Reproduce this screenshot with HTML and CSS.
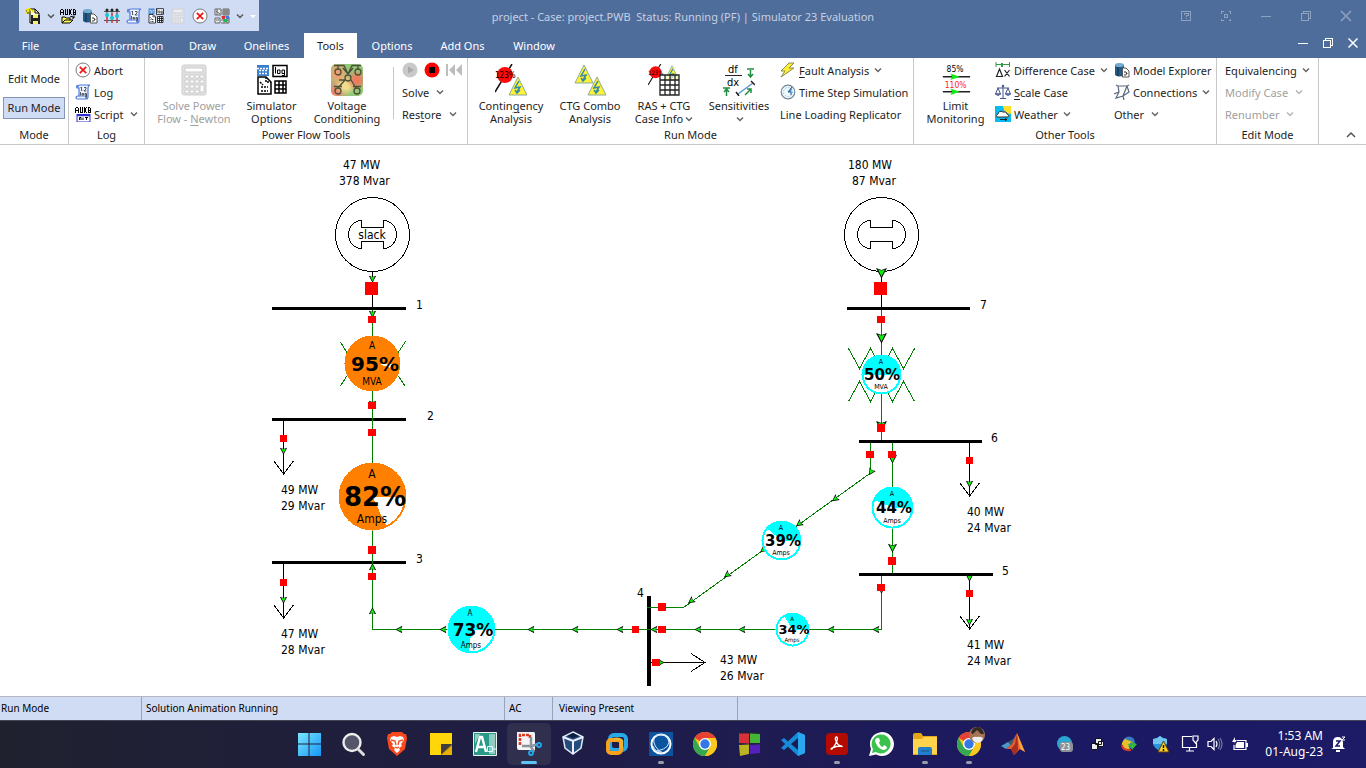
FILE: index.html
```html
<!DOCTYPE html>
<html lang="en">
<head>
<meta charset="utf-8">
<title>project - Case: project.PWB</title>
<link rel="stylesheet" href="styles.css">
</head>
<body>
<svg class="defs" aria-hidden="true">
  <symbol id="chev" viewBox="0 0 8 8"><path d="M1 2.500 4 5.500 7 2.500" fill="none" stroke="currentColor" stroke-width="1.500"/></symbol>
  <symbol id="abort" viewBox="0 0 16 16"><circle cx="8" cy="8" r="7" fill="#fff" stroke="#777"/><path d="M4.800 4.800 11.200 11.200M11.200 4.800 4.800 11.200" stroke="#f01818" stroke-width="1.800"/></symbol>
  <symbol id="log" viewBox="0 0 16 16"><path d="M3 2.500Q3 1 5 1H15Q13 1.500 13 4V12.500Q13 15 11 15H2.500Q1 15 1 13.500T3 12H4V4H2Q1 3 2 1.500Z" fill="#edf3ff" stroke="#4c78dc" stroke-width="1.200"/><path d="M4 12H11V15" fill="none" stroke="#4c78dc"/><path d="M5.500 4 6.500 3V7M8 6.500V7M9 3.500H11V5L9 7H11.500M5.500 8V11.500M7 9.500H8.500V11H7ZM10 9.500H11.500V13H10M10 9.500V11H11.500" fill="none" stroke="#333" stroke-width=".8"/></symbol>
  <symbol id="aux" viewBox="0 0 16 16"><g fill="none" stroke="#000" stroke-width="1" shape-rendering="crispEdges"><path d="M.5 7V3L1.500 1.500H2.500L3.500 3V7M.5 4.500H3.500M5.500 1V6.500H7.500V1M9 1 11.500 7M11.500 1 9 7M13.500 1V6.500H15.500V2.500L14.500 1.500H13M13.500 4H15.500"/></g></symbol>
  <symbol id="script" viewBox="0 0 16 16"><use href="#aux"/><rect x="2" y="8.500" width="13" height="7.500" fill="#fff" stroke="#3030d0"/><path d="M2 9.500H15" stroke="#3030d0" stroke-width="1.500"/><path d="M4.500 14V11.500H6V14M8 11.500V14M10 11.500H13M11.500 11.500V14" stroke="#000" fill="none"/></symbol>
  <symbol id="auxopen" viewBox="0 0 16 16"><use href="#aux"/><path d="M2 15V9H5L6 10H10V12M2 15 5 12H13L10 15Z" fill="#ffff60" stroke="#000"/><path d="M10 9Q13 7 14 10M14 7.500V10H12" stroke="#000" fill="none"/></symbol>
  <symbol id="newcase" viewBox="0 0 16 16"><path d="M5 1H10L14 5V15H5Z" fill="#fffbd0" stroke="#000"/><path d="M10 1V5H14" fill="none" stroke="#000"/><path d="M6 7H15V16H6Z" fill="#222"/><path d="M8 7H13V10H8ZM8 13H13V16H8Z" fill="#f3ef75"/><path d="M0 2H6M3 0V6M1 5 6 1M7 3H9" stroke="#f4e500" stroke-width="2"/><path d="M1 3H2M4 2H5M2 5H4" stroke="#333"/></symbol>
  <symbol id="cyl" viewBox="0 0 16 16"><path d="M1 3Q5 0 10 3V13Q5 16 1 13Z" fill="#235b87"/><path d="M4 2V14" stroke="#143d60" stroke-width="1.500"/><ellipse cx="5.500" cy="3" rx="4.500" ry="2" fill="#72aad0"/><path d="M8.500 6H12L15 9V15H8.500Z" fill="#fff" stroke="#555"/><path d="M10 13Q12 14 13 11M10 10H12L13 12" fill="none" stroke="#333"/></symbol>
  <symbol id="sliders" viewBox="0 0 16 16"><path d="M3 1V15M8 1V15M13 1V15M0 3.500H16M0 12.500H16" stroke="#555"/><g fill="#222"><circle cx="3" cy="2" r="1.500"/><circle cx="8" cy="2" r="1.500"/><circle cx="13" cy="2" r="1.500"/></g><path d="M3 5V15M8 5V15M13 5V15" stroke="#ef3030"/><g fill="#11c9df"><circle cx="3" cy="7" r="2"/><circle cx="8" cy="10" r="2"/><circle cx="13" cy="8" r="2"/></g></symbol>
  <symbol id="simopt" viewBox="0 0 32 32"><path d="M1 1H13V12H1Z" fill="#397fcd"/><path d="M1 4.500H13M3 6.500H12M3 9.500H12" stroke="#fff" stroke-dasharray="2 1" stroke-width="1.500"/><rect x="17" y="1.500" width="14" height="11" fill="#fff" stroke="#000" stroke-width="1.500"/><path d="M19.500 3V9.500M21.500 6H24V9.500H21.500ZM26 6H28.500V11.500H26M26 6V9.500H28.500" fill="none" stroke="#000"/><path d="M2 13H10L15 18V30H2Z" fill="#fff" stroke="#000" stroke-width="1.500"/><path d="M10 13V18H15M4 18 7 21M5 23H12M5 27H12" fill="none" stroke="#000" stroke-width="1.500" stroke-dasharray="2 1"/><path d="M19 17H30V29H19ZM23 17V29M27 17V29M19 21H30M19 25H30" fill="#fff" stroke="#000" stroke-width="1.500"/></symbol>
  <symbol id="calc" viewBox="0 0 32 32"><rect x="4" y="1" width="24" height="30" rx="2" fill="#e0e0e0" stroke="#cfcfcf"/><rect x="7" y="4" width="18" height="4" fill="#fff" stroke="#cdcdcd"/><g fill="#fff" stroke="#cecece"><path d="M7 11H11V14H7ZM12 11H16V14H12ZM17 11H21V14H17ZM22 11H26V14H22ZM7 16H11V19H7ZM12 16H16V19H12ZM17 16H21V19H17ZM22 16H26V19H22ZM7 21H11V24H7ZM12 21H16V24H12ZM17 21H21V24H17ZM22 21H26V28H22ZM7 26H11V29H7ZM12 26H16V29H12ZM17 26H21V29H17Z"/></g></symbol>
  <symbol id="casegrid" viewBox="0 0 16 16"><path d="M1 1H7V7H1ZM1 10H6V15H1ZM9 1H15V7H9ZM11 1V7M13 1V7M9 3H15M9 5H15M7 9H15V15H7M10 9V15M13 9V15M7 12H15M2 3 6 6M3 1V7M2 12H5" fill="#eee" stroke="#666"/><path d="M8 8H11V11H8Z" fill="#df3030"/><path d="M12 8H15V11H12Z" fill="#4679dc"/><path d="M10 11H13V14H10Z" fill="#20ba58"/></symbol>
  <symbol id="volt" viewBox="0 0 32 32"><g fill="none" stroke="#4c5038" stroke-width="1.300"><path d="M3 1.500H13L17 10 21 1.500H30M7 1.500V5M27 1.500V5M17 8V11M14 16 7 24M20 16 25 24M14 16H8M3 22.500H11M22 22.500H30M12 4 17 10 22 4"/><circle cx="7" cy="8" r="3"/><circle cx="27" cy="8" r="3"/><circle cx="17" cy="14" r="3"/><circle cx="7" cy="27" r="3"/><circle cx="26" cy="27" r="3"/></g></symbol>
  <symbol id="tri" viewBox="0 0 20 20"><path d="M10 1 19 19H1Z" fill="#fff333" stroke="#8ca99d"/><path d="M11 5 7 12 12 11 9 16M7 14 9 17 12 14" fill="none" stroke="#358aaa" stroke-width="1.500"/></symbol>
  <symbol id="breaker-ov" viewBox="0 0 32 32"><path d="M17 0 0 28" stroke="#111" stroke-width="1.500"/><circle cx="10" cy="11" r="8" fill="#ff0808"/><text x="0" y="14" font-size="8">123%</text></symbol>
  <symbol id="cont" viewBox="0 0 32 32"><use href="#breaker-ov"/><use href="#tri" x="13" y="12" width="20" height="20"/></symbol>
  <symbol id="combo" viewBox="0 0 32 32"><use href="#tri" width="20" height="20"/><use href="#tri" x="13" y="12" width="20" height="20"/></symbol>
  <symbol id="ras" viewBox="0 0 32 32"><use href="#tri" x="16" width="16" height="18"/><use href="#breaker-ov" width="24" height="24"/><path d="M12 11H31V31H12ZM17 11V31M22 11V31M27 11V31M12 16H31M12 21H31M12 26H31" fill="#ffffffaa" stroke="#222" stroke-width="1.300"/></symbol>
  <symbol id="sens" viewBox="0 0 32 32"><text x="5" y="9" font-size="11">df</text><path d="M2 11.500H19" stroke="#222"/><text x="4" y="22" font-size="11">dx</text><g stroke="#209040" fill="none" stroke-width="1.500"><path d="M24 5H31M27.500 6V13M25 10 27.500 13 30 10M0 24H7M3.500 25V32M1 28 3.500 25 6 28M22 31 28 25M24 25H28V29"/></g><path d="M15 30 30 19" stroke="#5a98d0" stroke-width="1.500"/><path d="M13 28 16 32M28 17 32 21" stroke="#222" stroke-width="1.500"/></symbol>
  <symbol id="fault" viewBox="0 0 16 16"><path d="M9 1H14L9 6H14L1 15 5 9H1Z" fill="#ffef31" stroke="#8b8b55"/></symbol>
  <symbol id="time" viewBox="0 0 16 16"><circle cx="8" cy="8" r="6.800" fill="#eef7fc" stroke="#718797" stroke-width="1.200"/><circle cx="8" cy="8" r="4.500" fill="none" stroke="#6aaada" stroke-dasharray="1 2"/><path d="M12 3 8 8H11V11" stroke="#245d94" fill="#5396cc"/></symbol>
  <symbol id="limit" viewBox="0 0 32 34"><text x="6" y="8" font-size="9">85%</text><text x="4" y="25" font-size="9" fill="#ff2222">110%</text><path d="M2 13.500H31M2 29.500H31" stroke="#222" stroke-width="1.500"/><path d="M10 10 20 13.500 10 17 12 13.500ZM10 26 20 29.500 10 33 12 29.500Z" fill="#12ec12"/></symbol>
  <symbol id="diff" viewBox="0 0 16 16"><path d="M1 2.500H15M1 0V5M14.500 0V5" stroke="#339b48"/><path d="M7 1V5" stroke="#339b48" stroke-width="2"/><path d="M1.500 14.500 4.500 7 7.500 14.500ZM9.500 8 14.500 14.500M14.500 8 9.500 14.500" fill="none" stroke="#222" stroke-width="1.200"/></symbol>
  <symbol id="scale" viewBox="0 0 16 16"><path d="M8 2V14M5 14.500H11M2 4H14M3 4 .5 10H5.500ZM13 4 10.500 10H15.500Z" fill="none" stroke="#46558c"/><path d="M.5 10Q3 13 5.500 10ZM10.500 10Q13 13 15.500 10Z" fill="#a6b6de" stroke="#46558c"/><circle cx="8" cy="2" r="1.200" fill="#46558c"/></symbol>
  <symbol id="weather" viewBox="0 0 16 16"><path d="M0 0H16V16H0Z" fill="#08baf2"/><path d="M8 0H16V8Q9 8 8 0Z" fill="#ffe02a"/><path d="M2 11Q0 9 3 8Q4 4 8 6Q12 5 12 8Q15 9 13 11Z" fill="#fff" stroke="#333"/><path d="M5 13.500H12M10 12 12 13.500 10 15" stroke="#222" fill="none"/></symbol>
  <symbol id="conn" viewBox="0 0 16 16"><path d="M4 2H13L15 8 9 12 2 14 5 8 4 2M2 1 4 2M13 2 15 1M5 8 0 10M9 12 10 16M13 2 9 12" fill="none" stroke="#59677c" stroke-width="1.200"/></symbol>
  <symbol id="chrome" viewBox="0 0 24 24"><circle cx="12" cy="12" r="12" fill="#fbc91d"/><path d="M12 12 1.600 6A12 12 0 0 1 22.400 6H12Z" fill="#e64132"/><path d="M12 12 6.800 15 1.600 6A12 12 0 0 0 12 24L17.200 15Z" fill="#35a852"/><path d="M12 6H22.400A12 12 0 0 1 12 24L17.200 15Z" fill="#fbc91d"/><circle cx="12" cy="12" r="6" fill="#fff"/><circle cx="12" cy="12" r="4.700" fill="#3478e8"/></symbol>
  <symbol id="flow" viewBox="-6 -6 12 12" overflow="visible"><path d="M-5.500-5 0 5.500 5.500-5 0-3Z" fill="#000"/><path d="M-3.500-3.500 0-2.500 3.500-3.500 0 3.500Z" fill="#0cf00c"/></symbol>
</svg>

<header class="frame">
  <div class="titlebar">
    <div class="quick">
      <button class="q" aria-label="New case"><svg><use href="#newcase"/></svg></button>
      <button class="q drop" aria-label="More case types"><svg><use href="#chev"/></svg></button>
      <button class="q" aria-label="Load auxiliary file"><svg><use href="#auxopen"/></svg></button>
      <button class="q" aria-label="Model Explorer"><svg><use href="#cyl"/></svg></button>
      <button class="q" aria-label="Oneline view"><svg><use href="#sliders"/></svg></button>
      <button class="q" aria-label="Log"><svg><use href="#log"/></svg></button>
      <button class="q" aria-label="Simulator options"><svg><use href="#simopt"/></svg></button>
      <button class="q faded" aria-label="Solve"><svg><use href="#calc"/></svg></button>
      <button class="q" aria-label="Abort"><svg><use href="#abort"/></svg></button>
      <button class="q" aria-label="Case views"><svg><use href="#casegrid"/></svg></button>
      <button class="q drop" aria-label="More views"><svg><use href="#chev"/></svg></button>
      <button class="q drop" aria-label="Customize toolbar"><svg viewBox="0 0 8 8"><path d="M1 3H7L4 6Z" fill="#fff"/></svg></button>
    </div>
    <h1 class="title">project - Case: project.PWB&nbsp; Status: Running (PF) | Simulator 23 Evaluation</h1>
    <div class="winbtns">
      <button aria-label="Help"><svg viewBox="0 0 12 12"><path d="M1.500 1.500H10.500V10.500H1.500ZM4 5V3.500H8V5.500H6V7M6 8V9"/></svg></button>
      <button aria-label="Display options"><svg viewBox="0 0 12 12"><path d="M1.500 3.500V1.500H3.500M8.500 1.500H10.500V3.500M10.500 8.500V10.500H8.500M3.500 10.500H1.500V8.500M4.500 4.500H7.500V7.500H4.500Z"/></svg></button>
      <button aria-label="Minimize"><svg viewBox="0 0 12 12"><path d="M1 6.500H11"/></svg></button>
      <button aria-label="Restore"><svg viewBox="0 0 12 12"><path d="M1.500 3.500H8.500V10.500H1.500ZM3.500 3.500V1.500H10.500V8.500H8.500"/></svg></button>
      <button aria-label="Close"><svg class="x" viewBox="0 0 12 12"><path d="M1 1 11 11M11 1 1 11"/></svg></button>
    </div>
  </div>
  <div class="tabrow">
    <nav class="tabs">
      <button>File</button><button>Case Information</button><button>Draw</button><button>Onelines</button><button class="active">Tools</button><button>Options</button><button>Add Ons</button><button>Window</button>
    </nav>
    <div class="docbtns">
      <button aria-label="Minimize diagram"><svg viewBox="0 0 12 12"><path d="M1 6.500H11"/></svg></button>
      <button aria-label="Restore diagram"><svg viewBox="0 0 12 12"><path d="M1.500 3.500H8.500V10.500H1.500ZM3.500 3.500V1.500H10.500V8.500H8.500"/></svg></button>
      <button aria-label="Close diagram"><svg class="x" viewBox="0 0 12 12"><path d="M1.500 1.500 10.500 10.500M10.500 1.500 1.500 10.500"/></svg></button>
    </div>
  </div>
</header>

<section class="ribbon">
  <div class="group g-mode">
    <div class="body modes"><button>Edit Mode</button><button class="on">Run Mode</button></div>
    <h2>Mode</h2>
  </div>
  <div class="group g-log">
    <div class="body"><div class="stack">
      <button class="sm"><svg><use href="#abort"/></svg>Abort</button>
      <button class="sm"><svg><use href="#log"/></svg>Log</button>
      <button class="sm"><svg><use href="#script"/></svg>Script<svg class="chev wide"><use href="#chev"/></svg></button>
    </div></div>
    <h2>Log</h2>
  </div>
  <div class="group g-flow">
    <div class="body">
      <button class="big" disabled><svg><use href="#calc"/></svg><span>Solve Power<br>Flow - <u>N</u>ewton</span></button>
      <button class="big"><svg><use href="#simopt"/></svg><span>Simulator<br>Options</span></button>
      <button class="big"><svg class="heat"><use href="#volt"/></svg><span>Voltage<br>Conditioning</span></button>
      <div class="stack solver">
        <div class="play">
          <button aria-label="Play" disabled><svg viewBox="0 0 16 16"><circle cx="8" cy="8" r="7.500" fill="#c9c9c9"/><path d="M6 4.500 12 8 6 11.500Z" fill="#a9a9a9"/></svg></button>
          <button aria-label="Stop"><svg viewBox="0 0 16 16"><circle cx="8" cy="8" r="7.500" fill="#f00"/><path d="M5 5H11V11H5Z"/></svg></button>
          <button aria-label="Reset" disabled><svg viewBox="0 0 16 16"><path d="M0 2H2V14H0ZM9 2V14L3 8ZM16 2V14L10 8Z" fill="#bdbdbd"/></svg></button>
        </div>
        <button class="sm">Solve<svg class="chev wide"><use href="#chev"/></svg></button>
        <button class="sm"><span>Res<u>t</u>ore</span><svg class="chev wide"><use href="#chev"/></svg></button>
      </div>
    </div>
    <h2>Power Flow Tools</h2>
  </div>
  <div class="group g-run">
    <div class="body">
      <button class="big"><svg><use href="#cont"/></svg><span>Contin<u>g</u>ency<br>Analysis</span></button>
      <button class="big"><svg><use href="#combo"/></svg><span>CTG Combo<br>Analysis</span></button>
      <button class="big"><svg><use href="#ras"/></svg><span>RAS + CTG<br>Case Info<svg class="chev"><use href="#chev"/></svg></span></button>
      <button class="big"><svg><use href="#sens"/></svg><span>Sensitivities<br><svg class="chev"><use href="#chev"/></svg></span></button>
      <div class="stack">
        <button class="sm"><svg><use href="#fault"/></svg><span><u>F</u>ault Analysis</span><svg class="chev"><use href="#chev"/></svg></button>
        <button class="sm"><svg><use href="#time"/></svg>Time Step Simulation</button>
        <button class="sm">Line Loading Replicator</button>
      </div>
    </div>
    <h2>Run Mode</h2>
  </div>
  <div class="group g-other">
    <div class="body">
      <button class="big"><svg><use href="#limit"/></svg><span>Limit<br>Monitoring</span></button>
      <div class="stack">
        <button class="sm"><svg><use href="#diff"/></svg>Difference Case<svg class="chev"><use href="#chev"/></svg></button>
        <button class="sm"><svg><use href="#scale"/></svg><span><u>S</u>cale Case</span></button>
        <button class="sm"><svg><use href="#weather"/></svg>Weather<svg class="chev"><use href="#chev"/></svg></button>
      </div>
      <div class="stack">
        <button class="sm"><svg><use href="#cyl"/></svg>Model Explorer</button>
        <button class="sm"><svg><use href="#conn"/></svg>Connections<svg class="chev"><use href="#chev"/></svg></button>
        <button class="sm">Other<svg class="chev wide"><use href="#chev"/></svg></button>
      </div>
    </div>
    <h2>Other Tools</h2>
  </div>
  <div class="group g-edit">
    <div class="body"><div class="stack">
      <button class="sm">Equivalencing<svg class="chev"><use href="#chev"/></svg></button>
      <button class="sm" disabled>Modify Case<svg class="chev wide"><use href="#chev"/></svg></button>
      <button class="sm" disabled>Renumber<svg class="chev wide"><use href="#chev"/></svg></button>
    </div></div>
    <h2>Edit Mode</h2>
  </div>
  <button class="collapse" aria-label="Collapse ribbon"><svg viewBox="0 0 10 8"><path d="M1 6 5 2 9 6"/></svg></button>
</section>

<main class="canvas">
<svg class="oneline" viewBox="0 145 1366 551" preserveAspectRatio="xMidYMin meet">
  <g class="wire">
    <path d="M372.500 310V629.500H649M881.500 310V441M848.500 348.500 859.500 368.500 870.500 348.500 881.500 368.500 892.500 348.500 903.500 368.500 914.500 348.500M848.500 401.500 859.500 381.500 870.500 401.500 881.500 381.500 892.500 401.500 903.500 381.500 914.500 401.500M340.500 342 347.500 353.500M405.500 341.500 397.500 353.500M340.500 386 347.500 375M405.500 386.500 397.500 375M870.500 442V473L683.500 607.500H649M892.500 442V574M881.500 575V629.500H649"/>
  </g>
  <g class="ink">
    <circle cx="372.500" cy="234.500" r="37"/><circle cx="881.500" cy="234.500" r="37"/>
    <path d="M361.500 220.500A13 14 0 0 0 361.500 248.500V241.500H383.500V248.500A13 14 0 0 0 383.500 220.500V227.500H361.500ZM870.500 220.500A13 14 0 0 0 870.500 248.500V241.500H892.500V248.500A13 14 0 0 0 892.500 220.500V227.500H870.500Z"/>
    <path d="M372.500 272V308M881.500 272V308M283.500 421V474M274 461 283.500 474 293.500 461M283.500 564V618M274 605 283.500 618 293.500 605M969.500 443V496M960 483 969.500 496 979.500 483M969.500 576V629M960 616 969.500 629 979.500 616M649 662.500H705M691 653.500 705 662.500 691 671.500"/>
  </g>
  <g class="bus">
    <rect x="272" y="307" width="134" height="3"/><rect x="272" y="418" width="134" height="3"/><rect x="272" y="561" width="134" height="3"/>
    <rect x="847" y="307" width="123" height="3"/><rect x="859" y="440" width="123" height="3"/><rect x="859" y="573" width="134" height="3"/><rect x="647" y="596" width="4" height="90"/>
  </g>
  <path class="wire" d="M372.500 418V421M372.500 561V564M647 629.500H651M647 607.500H651"/>
  <g class="flows">
    <use href="#flow" x="-6" y="-6" width="12" height="12" transform="translate(881.500 273)"/>
    <use href="#flow" x="-6" y="-6" width="12" height="12" transform="translate(881.500 338)"/>
    <use href="#flow" x="-6" y="-6" width="12" height="12" transform="translate(881.500 426)"/>
    <use href="#flow" x="-4" y="-4" width="8" height="8" transform="translate(372.500 279)"/>
    <use href="#flow" x="-4" y="-4" width="8" height="8" transform="translate(372.500 314)"/>
    <use href="#flow" x="-4" y="-4" width="8" height="8" transform="translate(372.500 404)"/>
    <use href="#flow" x="-4" y="-4" width="8" height="8" transform="translate(283.500 451)"/>
    <use href="#flow" x="-4" y="-4" width="8" height="8" transform="translate(283.500 600)"/>
    <use href="#flow" x="-4" y="-4" width="8" height="8" transform="translate(969.500 484)"/>
    <use href="#flow" x="-4" y="-4" width="8" height="8" transform="translate(969.500 578)"/>
    <use href="#flow" x="-4" y="-4" width="8" height="8" transform="translate(969.500 622)"/>
    <use href="#flow" x="-4" y="-4" width="8" height="8" transform="translate(881.500 590)"/>
    <use href="#flow" x="-5" y="-5" width="10" height="10" transform="translate(892.500 459)"/>
    <use href="#flow" x="-5" y="-5" width="10" height="10" transform="translate(892.500 548)"/>
    <use href="#flow" x="-4" y="-4" width="8" height="8" transform="translate(372.500 567) rotate(180)"/>
    <use href="#flow" x="-4" y="-4" width="8" height="8" transform="translate(372.500 611) rotate(180)"/>
    <use href="#flow" x="-4" y="-4" width="8" height="8" transform="translate(399 629.500) rotate(90)"/>
    <use href="#flow" x="-4" y="-4" width="8" height="8" transform="translate(443 629.500) rotate(90)"/>
    <use href="#flow" x="-4" y="-4" width="8" height="8" transform="translate(531 629.500) rotate(90)"/>
    <use href="#flow" x="-4" y="-4" width="8" height="8" transform="translate(575 629.500) rotate(90)"/>
    <use href="#flow" x="-4" y="-4" width="8" height="8" transform="translate(620 629.500) rotate(90)"/>
    <use href="#flow" x="-4" y="-4" width="8" height="8" transform="translate(654 629.500) rotate(90)"/>
    <use href="#flow" x="-4" y="-4" width="8" height="8" transform="translate(698 629.500) rotate(90)"/>
    <use href="#flow" x="-4" y="-4" width="8" height="8" transform="translate(742 629.500) rotate(90)"/>
    <use href="#flow" x="-4" y="-4" width="8" height="8" transform="translate(831 629.500) rotate(90)"/>
    <use href="#flow" x="-4" y="-4" width="8" height="8" transform="translate(876 629.500) rotate(90)"/>
    <use href="#flow" x="-4" y="-4" width="8" height="8" transform="translate(661 662.500) rotate(-90)"/>
    <use href="#flow" x="-4" y="-4" width="8" height="8" transform="translate(871 472) rotate(30)"/>
    <use href="#flow" x="-4" y="-4" width="8" height="8" transform="translate(835 499) rotate(54)"/>
    <use href="#flow" x="-4" y="-4" width="8" height="8" transform="translate(799 524) rotate(54)"/>
    <use href="#flow" x="-4" y="-4" width="8" height="8" transform="translate(763 550) rotate(54)"/>
    <use href="#flow" x="-4" y="-4" width="8" height="8" transform="translate(727 575) rotate(54)"/>
    <use href="#flow" x="-4" y="-4" width="8" height="8" transform="translate(691 601) rotate(54)"/>
  </g>
  <g class="breaker">
    <rect x="365" y="282" width="13" height="13"/><rect x="874" y="282" width="13" height="13"/>
    <rect x="368" y="316" width="8" height="7"/><rect x="368" y="402" width="8" height="7"/><rect x="368" y="429" width="8" height="7"/><rect x="368" y="546" width="8" height="8"/><rect x="368" y="573" width="8" height="7"/>
    <rect x="877" y="316" width="8" height="7"/><rect x="877" y="424" width="8" height="8"/><rect x="866" y="451" width="8" height="7"/><rect x="888" y="451" width="8" height="7"/><rect x="888" y="557" width="8" height="8"/><rect x="877" y="584" width="8" height="7"/>
    <rect x="280" y="435" width="7" height="7"/><rect x="280" y="579" width="7" height="7"/><rect x="966" y="457" width="7" height="7"/><rect x="966" y="590" width="7" height="7"/>
    <rect x="632" y="626" width="7" height="7"/><rect x="658" y="626" width="8" height="7"/><rect x="658" y="603" width="8" height="8"/><rect x="652" y="659" width="8" height="7"/>
  </g>
  <g class="pie">
    <circle class="hot" cx="372.500" cy="363.500" r="28"/><path d="M378 363.500H392L390 368Z"/>
    <circle class="hot" cx="372.500" cy="496.500" r="34"/><path d="M372.500 496.500H404.500A32 32 0 0 1 386 525.500Z"/>
    <circle class="cool" cx="471.500" cy="629.500" r="24"/><path d="M471.500 629.500H493.500A22 22 0 0 1 468.800 651.300Z"/>
    <circle class="cool" cx="881.500" cy="374.500" r="20"/><path d="M863.500 374.500H899.500A18 18 0 0 1 863.500 374.500Z"/>
    <circle class="cool" cx="892.500" cy="507.500" r="21"/><path d="M892.500 507.500H911.500A19 19 0 1 1 874.900 500.400Z"/>
    <circle class="cool" cx="781.500" cy="540.500" r="20"/><path d="M781.500 540.500H799.500A18 18 0 1 1 767.700 528.900Z"/>
    <circle class="cool" cx="792.500" cy="629.500" r="17"/><path d="M792.500 629.500H807.500A15 15 0 1 1 784.600 616.800Z"/>
  </g>
  <g class="gauge">
    <text class="s10" x="372" y="349">A</text><text class="b20" x="375" y="371">95%</text><text class="s10" x="372" y="385">MVA</text>
    <text class="s12" x="372" y="478">A</text><text class="b26" x="375" y="506">82%</text><text class="s12" x="372" y="523">Amps</text>
    <text class="s8" x="470" y="616">A</text><text class="b17" x="473" y="636">73%</text><text class="s8" x="471" y="648">Amps</text>
    <text class="s7" x="881" y="364">A</text><text class="b15" x="882" y="380">50%</text><text class="s7" x="881" y="389">MVA</text>
    <text class="s7" x="892" y="496">A</text><text class="b15" x="894" y="513">44%</text><text class="s7" x="892" y="523">Amps</text>
    <text class="s7" x="781" y="530">A</text><text class="b15" x="783" y="546">39%</text><text class="s7" x="781" y="555">Amps</text>
    <text class="s6" x="792" y="621">A</text><text class="b13" x="794" y="634">34%</text><text class="s6" x="792" y="642">Amps</text>
    <text class="s12" x="372" y="239">slack</text>
  </g>
  <g class="label">
    <text x="343" y="169">47 MW</text><text x="339" y="185">378 Mvar</text>
    <text x="848" y="169">180 MW</text><text x="852" y="185">87 Mvar</text>
    <text x="281" y="494">49 MW</text><text x="281" y="510">29 Mvar</text>
    <text x="281" y="638">47 MW</text><text x="281" y="654">28 Mvar</text>
    <text x="967" y="516">40 MW</text><text x="967" y="532">24 Mvar</text>
    <text x="967" y="649">41 MW</text><text x="967" y="665">24 Mvar</text>
    <text x="720" y="664">43 MW</text><text x="720" y="680">26 Mvar</text>
    <text x="416" y="309">1</text><text x="427" y="420">2</text><text x="416" y="563">3</text><text x="637" y="597">4</text><text x="1002" y="575">5</text><text x="991" y="442">6</text><text x="980" y="309">7</text>
  </g>
</svg>
</main>

<footer class="status"><span>Run Mode</span><span>Solution Animation Running</span><span>AC</span><span>Viewing Present</span></footer>

<div class="taskbar">
  <nav class="apps">
    <button aria-label="Start"><svg viewBox="0 0 24 24"><defs><linearGradient id="win" x2="1" y2="1"><stop stop-color="#7be8ff"/><stop offset="1" stop-color="#1595f5"/></linearGradient></defs><path d="M1 1H11.500V11.500H1ZM12.500 1H24V11.500H12.500ZM1 12.500H11.500V24H1ZM12.500 12.500H24V24H12.500Z" fill="url(#win)"/></svg></button>
    <button aria-label="Search"><svg viewBox="0 0 24 24"><circle cx="11" cy="10.500" r="8.500" fill="#55566a" stroke="#eee" stroke-width="2.400"/><path d="M17 17 22.500 22.500" stroke="#ddd" stroke-width="3" stroke-linecap="round"/></svg></button>
    <button aria-label="Brave"><svg viewBox="0 0 24 24"><path d="M7 0H17L19 2H21L22 6 20 17 12 24 4 17 2 6 3 2H5Z" fill="#fa4a1d"/><path d="M6 5 9 4 12 5 15 4 18 5 19 8 16 12 17 14 14 16 15 18 12 21 9 18 10 16 7 14 8 12 5 8Z" fill="#fff"/><path d="M6 8 10 9 11 13M18 8 14 9 13 13M10 15 12 16 14 15" fill="none" stroke="#fa4a1d" stroke-width="1.300"/></svg></button>
    <button aria-label="Sticky Notes"><svg viewBox="0 0 24 24"><path d="M1 1H23V12L12 23H1Z" fill="#ffd60a"/><path d="M12 12H23L12 23Z" fill="#433f3a"/><path d="M23 13V23H12Z" fill="#eab000"/></svg></button>
    <button aria-label="AutoCAD"><svg viewBox="0 0 24 24"><path d="M.5.5H23.500V23.500H.5Z" fill="#289986" stroke="#ebf5f4"/><path d="M2 2H7L2 12ZM18 2H22V22H18Z" fill="#96cbc0"/><path d="M3 20 7 5H9L13 20M5 15H11" fill="none" stroke="#fff" stroke-width="2.400"/><path d="M17 2V22M14.500 14.500H19.500V19.500H14.500ZM20 17H24" fill="none" stroke="#dff"/></svg></button>
    <button class="current" aria-label="Snipping Tool"><svg viewBox="0 0 24 24"><path d="M0 0H17Q18 0 18 2V18H2Q0 18 0 16Z" fill="#f4f5f7"/><path d="M3 13V3H13V6" fill="none" stroke="#d83c21" stroke-width="2.600" stroke-dasharray="3 1"/><path d="M14 5V15L17 20M5 14H15L21 12" fill="none" stroke="#8d959c" stroke-width="2.500"/><circle cx="22" cy="13" r="2" fill="none" stroke="#22a8ed" stroke-width="1.800"/><circle cx="14" cy="21" r="2" fill="none" stroke="#22a8ed" stroke-width="1.800"/></svg></button>
    <button aria-label="VirtualBox"><svg viewBox="0 0 24 24"><path d="M12 0 22 5 20 16 12 22 4 16 2 5Z" fill="#234c7c" stroke="#dce7f1" stroke-width="1.500"/><path d="M2 5 12 9 22 5M12 9V22" fill="none" stroke="#eef" stroke-width="2"/><path d="M12 1 18 4 12 6 6 4Z" fill="#0d203b"/></svg></button>
    <button aria-label="VMware"><svg viewBox="0 0 24 24"><rect x="5" y="3" width="16" height="15" rx="4" fill="none" stroke="#27a8e8" stroke-width="4"/><rect x="3" y="8" width="13" height="13" rx="3" fill="none" stroke="#f8a11b" stroke-width="4"/><path d="M9 7Q15 6 17 9V16" fill="none" stroke="#edb633" stroke-width="2.500"/></svg></button>
    <button class="running" aria-label="PowerWorld"><svg viewBox="0 0 24 24"><path d="M0 0H24V24H0Z" fill="#0b55a0"/><circle cx="12" cy="12" r="9.500" fill="none" stroke="#fff" stroke-width="2"/><path d="M5 6Q3 14 14 22M19 6Q23 16 8 19M6 4Q17-1 21 11M4 14Q6 20 13 20" fill="none" stroke="#c9e4fb"/></svg></button>
    <button aria-label="Chrome"><svg><use href="#chrome"/></svg></button>
    <button aria-label="Blocks"><svg viewBox="0 0 24 24"><path d="M2 1H12V12L2 11Z" fill="#d93138"/><path d="M13 1 23 2V11H13Z" fill="#43b735"/><path d="M2 13 12 12V22L3 24Z" fill="#bbb522"/><path d="M13 13 23 12V21L13 22Z" fill="#5620bc"/><path d="M2 1H22M2 12H23M12.500 1V22" stroke="#29242e"/></svg></button>
    <button aria-label="Visual Studio Code"><svg viewBox="0 0 24 24"><path d="M17 0 24 3V21L17 24 2 10 0 8 3 6 17 18V6L3 18 0 16 2 14Z" fill="#178bd8"/><path d="M17 0 24 3V21L17 24Z" fill="#29a7f1"/></svg></button>
    <button class="running" aria-label="Acrobat"><svg viewBox="0 0 24 24"><rect x="1" y="1" width="22" height="22" rx="4" fill="#b40b00"/><path d="M11.500 5C14 5 11 13 7 17C4 18 8 14 16 14C20 15 13 15 11 9C10 7 10 5 11.500 5Z" fill="none" stroke="#fff" stroke-width="1.300"/></svg></button>
    <button aria-label="WhatsApp"><svg viewBox="0 0 24 24"><path d="M0 24 2 17A12 12 0 1 1 7 22.500Z" fill="#fff"/><path d="M3 21 4 17A9.500 9.500 0 1 1 7 20Z" fill="#39c34c"/><path d="M8 6 10 6 11 9 10 11Q11 14 14 15L15 13 18 15Q18 18 14 18Q8 16 6 9Q6 7 8 6Z" fill="#fff"/></svg></button>
    <button class="running" aria-label="File Explorer"><svg viewBox="0 0 24 24"><path d="M0 3Q0 1 2 1H8L10 4H24V23H0Z" fill="#e5a617"/><path d="M0 7H9L11 5H24V22H0Z" fill="#ffd44c"/><path d="M5 17Q5 15 7 15H17Q19 15 19 17V23H5Z" fill="#207fc8"/><path d="M8 19H16" stroke="#125890"/></svg></button>
    <button class="running" aria-label="Chrome profile"><svg viewBox="0 0 24 24"><use href="#chrome"/><circle cx="20" cy="3" r="8" fill="#a57454"/><path d="M14 1Q15-5 21-5Q26-4 27 2L24 2 20-2 16 2Z" fill="#342923"/><path d="M15 6Q18 4 20 5Q23 4 26 6Q25 11 20 11Q16 10 15 6Z" fill="#eee"/></svg></button>
    <button aria-label="MATLAB"><svg viewBox="0 0 24 24"><path d="M0 14 7 10 11 12 5 17Z" fill="#4c9acb"/><path d="M7 10 12 7 16 1 11 15Z" fill="#3d566f"/><path d="M5 17 11 12 16 1 24 20 19 17 13 23 10 17Z" fill="#e15e2a"/><path d="M16 1 17 18 13 23 10 17 14 12Z" fill="#a62d20"/><path d="M16 1 24 20 19 17Z" fill="#f5a246"/></svg></button>
  </nav>
  <div class="tray">
    <button aria-label="Simulator 23"><svg viewBox="0 0 16 16"><circle cx="7.500" cy="7.500" r="7.500" fill="#2ca5d3"/><rect x="3" y="6" width="13" height="10" rx="3" fill="#8e9298"/><text x="4" y="14" font-size="8" fill="#fff">23</text></svg></button>
    <button aria-label="Windows"><svg viewBox="0 0 16 16"><path d="M6.500 2.500H12.500V8.500H6.500ZM9.500 5.500H14.500V10.500H9.500ZM2.500 7.500H8.500V13.500H2.500Z" fill="#eee" stroke="#111"/></svg></button>
    <button aria-label="Download manager"><svg viewBox="0 0 16 16"><circle cx="8" cy="6.500" r="6" fill="#3879bf"/><path d="M4 3Q0 6 1 10Q3 14 9 13Q5 8 12 6Z" fill="#e3c329"/><path d="M1 9Q2 15 10 14" stroke="#d83d2a" stroke-width="2" fill="none"/><path d="M6 8 11 9 10 6 16 8 11 14 10 11Z" fill="#35bc37"/></svg></button>
    <button aria-label="Security"><svg viewBox="0 0 16 16"><path d="M7 0Q10 3 14 3V8Q12 13 7 15Q1 12 0 8V3Q4 3 7 0Z" fill="#2995da"/><path d="M7 0Q10 3 14 3V8H0V3Q4 3 7 0Z" fill="#70c4ef"/><path d="M10.500 5 16 16H5Z" fill="#ffd21e" stroke="#58400e"/><path d="M10.500 9V12M10.500 13V15" stroke="#111" stroke-width="1.500"/></svg></button>
    <button aria-label="Network"><svg class="line" viewBox="0 0 16 16"><path d="M10 .5H.5V11.500H14.500V7M4 15H12M7.500 12V15M11 0H16V4L13.500 7 11 4Z"/></svg></button>
    <button aria-label="Volume"><svg class="line" viewBox="0 0 16 16"><path d="M1 5.500H4L7 2.500V13.500L4 10.500H1ZM9 5Q11 8 9 11"/><path d="M11 3Q14.500 8 11 13M13 2Q17 8 13 14" opacity=".4"/></svg></button>
    <button aria-label="Battery"><svg class="line" viewBox="0 0 16 16"><path d="M5 4.500H14V13.500H2V9"/><path d="M5 6H12V12H3.500V9ZM14 7H16V11H14ZM3 1 0 6H3L1 9 5 4H3Z" fill="#fff" stroke="none"/></svg></button>
    <div class="clock"><time>1:53 AM</time><time>01-Aug-23</time></div>
    <button aria-label="Notifications"><svg viewBox="0 0 16 16"><path d="M3 12V6Q3 1 8 1Q12 1 13 6V11L15 13H1ZM6 14H10V16H6Z" fill="#fff"/><path d="M6 5H10L6 10H10" fill="none" stroke="#1d1966" stroke-width="1.500"/><path d="M12 1H15L12 4H15" fill="none" stroke="#fff"/></svg></button>
  </div>
</div>
</body>
</html>
```
FILE: styles.css
```css
* { box-sizing: border-box; }
body {
  margin: 0;
  height: 100vh;
  display: flex;
  flex-direction: column;
  overflow: hidden;
  background: #fff;
  color: #1e1e1e;
  font: 11px/13px "Noto Sans", "Open Sans", sans-serif;
}
button {
  margin: 0;
  padding: 0;
  border: 0;
  background: none;
  color: inherit;
  font: inherit;
}
button:disabled { color: #a0a0a0; }
svg { display: block; width: 16px; height: 16px; flex: none; overflow: visible; }
svg text { font-family: "DejaVu Sans Condensed", "DejaVu Sans", sans-serif; }
.defs { display: none; }
h1, h2 { margin: 0; font: inherit; }
u { text-underline-offset: 2px; }

/* Window frame */
.frame { background: #4f6d9b; color: #fff; }
.titlebar { display: grid; grid-template-columns: 1fr auto 1fr; height: 33px; }
.quick {
  display: flex;
  align-items: center;
  justify-self: start;
  height: 31px;
  margin-left: 19px;
  padding-left: 3px;
  background: #d0dcf4;
}
.q { width: 22px; display: grid; place-items: center; }
.drop { width: 13px; color: #555; }
.drop svg { width: 8px; height: 8px; }
.faded { opacity: .8; }
.title { padding-bottom: 1px; align-self: center; color: #c5d0e2; }
.winbtns { display: flex; justify-self: end; height: 31px; }
.winbtns button { width: 40px; display: grid; place-items: center; color: #8ea2c2; }
.winbtns svg, .docbtns svg { width: 12px; height: 12px; fill: none; stroke: currentColor; shape-rendering: crispEdges; }
.winbtns .x, .docbtns .x { shape-rendering: auto; stroke-width: 1.5; }
.tabrow { display: flex; justify-content: space-between; height: 25px; }
.tabs { display: grid; grid-template-columns: 61px 115px 53px 75px 53px 70px 71px 72px; }
.tabs .active { background: #fff; color: #1e1e1e; }
.docbtns { display: flex; height: 20px; padding-right: 1px; }
.docbtns button { width: 25px; display: grid; place-items: center; }

/* Ribbon */
.ribbon { display: flex; height: 87px; border-bottom: 1px solid #c8c8c8; background: #fff; }
.group { display: flex; flex-direction: column; padding-top: 1px; border-right: 1px solid #c8c8c8; }
.group h2 { height: 19px; line-height: 20px; text-align: center; }
.body { display: flex; height: 66px; }
.g-mode { width: 69px; }
.g-log { width: 76px; }
.g-flow { width: 323px; }
.g-run { width: 446px; }
.g-other { width: 303px; }
.g-edit { width: 102px; }
.modes { flex-direction: column; gap: 7px; padding: 9px 3px 0; }
.modes button { height: 22px; padding-bottom: 2px; white-space: nowrap; border: 1px solid transparent; }
.modes .on { background: #d0dcf4; border-color: #8496b6; }
.stack { display: flex; flex-direction: column; }
.sm { display: flex; align-items: center; gap: 3px; height: 22px; white-space: nowrap; }
.sm .chev { margin-left: 2px; }
.sm .wide { margin-left: 4px; }
.chev { width: 8px; height: 8px; color: #666; }
:disabled .chev { color: #b5b5b5; }
.big { display: flex; flex-direction: column; align-items: center; gap: 3px; padding-top: 5px; white-space: nowrap; }
.big > svg { width: 32px; height: 32px; }
.big .chev { display: inline-block; margin-left: 2px; }
.heat {
  border-radius: 5px;
  background:
    radial-gradient(circle at 20% 30%, #f0a070 0 10%, transparent 35%),
    radial-gradient(circle at 80% 50%, #ee7a60 0 10%, transparent 35%),
    radial-gradient(circle at 45% 65%, #f3dc8c 0 15%, transparent 40%),
    radial-gradient(circle at 10% 90%, #e88870 0 10%, transparent 35%),
    #93c878;
}
.g-log .body { padding-left: 6px; }
.g-flow .body { display: grid; grid-template-columns: 78px 77px 74px 1fr; padding-left: 10px; }
.solver { margin-left: 9px; padding-left: 9px; position: relative; }
.solver::before { content: ""; position: absolute; left: 0; top: 8px; height: 52px; border-left: 1px solid #c8c8c8; }
.play { display: flex; align-items: center; gap: 6px; height: 22px; }
.g-run .body { display: grid; grid-template-columns: 78px 80px 68px 82px 1fr; padding-left: 4px; }
.g-other .body { display: grid; grid-template-columns: 79px 119px 1fr; padding-left: 2px; }
.g-edit .body { padding-left: 8px; }
.collapse { align-self: end; margin: 0 10px 5px auto; }
.collapse svg { width: 10px; height: 8px; fill: none; stroke: #555; stroke-width: 1.5; }

/* One-line diagram */
.canvas { flex: 1; min-height: 0; }
.oneline { width: 100%; height: 100%; }
.wire { fill: none; stroke: #008000; shape-rendering: crispEdges; }
.ink { fill: none; stroke: #000; shape-rendering: crispEdges; }
.breaker { fill: #f00; }
.pie { fill: #fff; shape-rendering: crispEdges; }
.hot { fill: #ff8000; }
.cool { fill: #0ff; }
.label { font-size: 12px; }
.gauge { text-anchor: middle; }
.s6 { font-size: 6px; }
.s7 { font-size: 7px; }
.s8 { font-size: 8px; }
.s10 { font-size: 10px; }
.s12 { font-size: 12px; }
.gauge .b13, .gauge .b15, .gauge .b17, .gauge .b20, .gauge .b26 { font-family: "DejaVu Sans", sans-serif; font-weight: 700; }
.b13 { font-size: 13px; }
.b15 { font-size: 15px; }
.b17 { font-size: 17px; }
.b20 { font-size: 20px; }
.b26 { font-size: 26px; }

/* Status bar */
.status {
  display: grid;
  grid-template-columns: 142px 363px 48px 185px 1fr;
  height: 24px;
  border-top: 1px solid #b4b8c0;
  background: #d0dcf4;
  color: #000;
  font-size: 10px;
  line-height: 22px;
}
.status span { padding-left: 4px; border-right: 1px solid #9aa3b4; }
.status span:first-child { padding-left: 1px; }
.status span:last-child { padding-left: 6px; border-right-width: 1px; }

/* Taskbar */
.taskbar {
  display: flex;
  justify-content: space-between;
  height: 48px;
  padding: 0 16px 0 287px;
  border-top: 1px solid #454555;
  background: linear-gradient(90deg, #20212f, #1f1d48 45%, #1c1963 75%, #1d1a66);
  color: #fff;
}
.apps { display: flex; align-items: center; padding-bottom: 1px; }
.apps button { position: relative; width: 44px; height: 42px; display: grid; place-items: center; }
.apps svg { width: 24px; height: 24px; }
.current { border-radius: 5px; background: #302f4e; }
.current::after, .running::after {
  content: "";
  position: absolute;
  bottom: 1px;
  left: 50%;
  width: 6px;
  height: 3px;
  margin-left: -3px;
  border-radius: 2px;
  background: #9b9bac;
}
.current::after { width: 16px; margin-left: -8px; background: #5cc4f5; }
.tray { display: flex; align-items: center; padding-bottom: 1px; }
.tray button { width: 32px; display: grid; place-items: center; }
.tray button:nth-of-type(n+5) { width: 25px; }
.line { fill: none; stroke: #fff; stroke-width: 1.2; }
.clock { display: flex; flex-direction: column; width: 73px; padding-right: 2px; text-align: right; font-size: 12px; line-height: 16px; }
```
